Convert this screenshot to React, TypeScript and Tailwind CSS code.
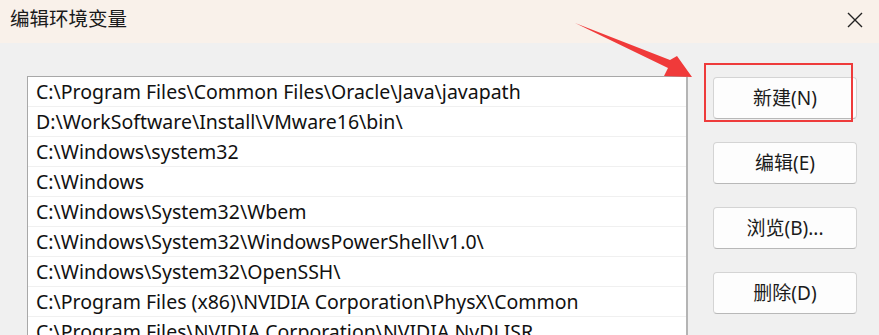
import { ReactNode } from 'react'

const paths = [
  'C:\\Program Files\\Common Files\\Oracle\\Java\\javapath',
  'D:\\WorkSoftware\\Install\\VMware16\\bin\\',
  'C:\\Windows\\system32',
  'C:\\Windows',
  'C:\\Windows\\System32\\Wbem',
  'C:\\Windows\\System32\\WindowsPowerShell\\v1.0\\',
  'C:\\Windows\\System32\\OpenSSH\\',
  'C:\\Program Files (x86)\\NVIDIA Corporation\\PhysX\\Common',
  'C:\\Program Files\\NVIDIA Corporation\\NVIDIA NvDLISR',
]

const font = { fontFamily: '"Noto Sans", "Noto Sans CJK SC", sans-serif' }

function Btn({ children }: { children: ReactNode }) {
  return (
    <div className="w-[144px] h-[42px] flex items-center justify-center bg-[#fdfdfd] border border-[#d4d4d4] border-b-[#b8b8b8] rounded-[4px] text-[19px] text-[#1b1b1b]">
      {children}
    </div>
  )
}

export default function App() {
  return (
    <div className="relative w-[879px] h-[335px] overflow-hidden bg-[#f0f0f0]" style={font}>
      {/* title bar */}
      <div className="h-[43px] bg-[#f9f1ea] flex items-center justify-between pl-[10px] pr-[16px]">
        <span className="text-[19.5px] text-[#1a1a1a] -mt-[6px]">编辑环境变量</span>
        <svg width="16" height="16" viewBox="0 0 16 16" className="-mt-[4px]">
          <path d="M1 1 L15 15 M15 1 L1 15" stroke="#222" strokeWidth="1.4" />
        </svg>
      </div>

      <div className="flex pt-[33px] pl-[27px]">
        {/* list */}
        <div className="w-[661px] bg-white border-l border-t border-[#a8a8a8] border-r-2 border-r-[#b4b4b4] h-[300px]">
          {paths.map((p) => (
            <div key={p} className="h-[30px] border-b border-[#f0f0f0] flex items-center pl-[8px] text-[19.5px] text-[#111] whitespace-nowrap">
              {p}
            </div>
          ))}
        </div>

        {/* buttons */}
        <div className="ml-[25px] pt-[1px] flex flex-col gap-[23px]">
          <Btn>新建(N)</Btn>
          <Btn>编辑(E)</Btn>
          <Btn>浏览(B)...</Btn>
          <Btn>删除(D)</Btn>
        </div>
      </div>

      {/* annotation: red box */}
      <div className="absolute left-[704px] top-[63px] w-[149px] h-[59px] border-2 border-[#ee3b3b]" />

      {/* annotation: red arrow */}
      <svg className="absolute left-0 top-0" width="879" height="335" viewBox="0 0 879 335">
        <polygon points="575,23 670,60 677,56 692,77 664,76 668,68" fill="#f03a3a" />
      </svg>
    </div>
  )
}
